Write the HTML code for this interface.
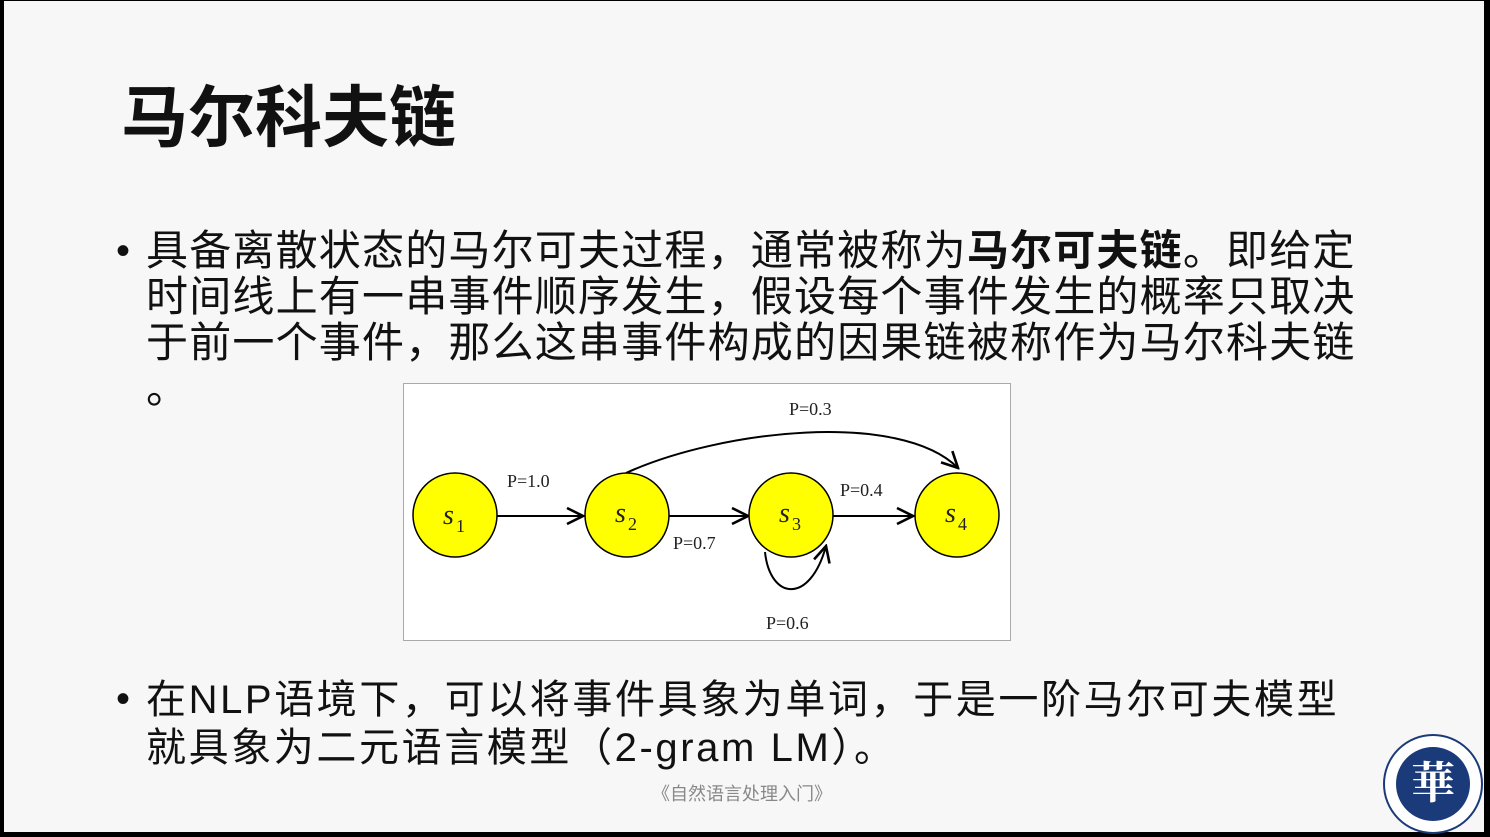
<!DOCTYPE html>
<html><head><meta charset="utf-8"><style>
html,body{margin:0;padding:0;}
body{width:1490px;height:837px;background:#000;position:relative;overflow:hidden;font-family:"Liberation Sans","Noto Sans CJK SC",sans-serif;}
.slide{position:absolute;left:4px;top:1px;width:1480px;height:831px;background:#f7f7f7;}
.t{position:absolute;white-space:nowrap;color:#111;}
</style></head><body>
<div class="slide"></div>
<div class="t" style="left:121px;top:80px;font-size:67px;font-weight:bold;line-height:78px;">马尔科夫链</div>
<div class="t" style="left:116px;top:228px;font-size:40px;line-height:46px;">•</div>
<div class="t" style="left:146px;top:228px;font-size:42px;line-height:46px;letter-spacing:1.2px;">具备离散状态的马尔可夫过程，通常被称为<b>马尔可夫链</b>。即给定<br>时间线上有一串事件顺序发生，假设每个事件发生的概率只取决<br>于前一个事件，那么这串事件构成的因果链被称作为马尔科夫链<br>。</div>
<div style="position:absolute;left:403px;top:383px;width:606px;height:256px;background:#fff;border:1px solid #aaa;"></div>
<svg style="position:absolute;left:0;top:0" width="1490" height="837">
<defs><marker id="a" markerWidth="10" markerHeight="10" refX="9" refY="5" orient="auto"><path d="M1,1 L9,5 L1,9" fill="none" stroke="#000" stroke-width="1.3"/></marker></defs>
<g stroke="#000" stroke-width="2" fill="none">
<line x1="497" y1="516" x2="583" y2="516" marker-end="url(#a)"/>
<line x1="669" y1="516" x2="748" y2="516" marker-end="url(#a)"/>
<line x1="833" y1="516" x2="913" y2="516" marker-end="url(#a)"/>
<path d="M626,473 C720,430 900,410 958,468" marker-end="url(#a)"/>
<path d="M765,552 C770,600 810,605 826,546" marker-end="url(#a)"/>
</g>
<g fill="#ffff00" stroke="#000" stroke-width="1.5">
<circle cx="455" cy="515" r="42"/><circle cx="627" cy="515" r="42"/><circle cx="791" cy="515" r="42"/><circle cx="957" cy="515" r="42"/>
</g>
<g font-family="Liberation Serif,serif" fill="#222">
<text x="443" y="524" font-size="28" font-style="italic">s</text><text x="456" y="532" font-size="18">1</text>
<text x="615" y="522" font-size="28" font-style="italic">s</text><text x="628" y="530" font-size="18">2</text>
<text x="779" y="522" font-size="28" font-style="italic">s</text><text x="792" y="530" font-size="18">3</text>
<text x="945" y="522" font-size="28" font-style="italic">s</text><text x="958" y="530" font-size="18">4</text>
<g font-size="18"><text x="507" y="487">P=1.0</text><text x="673" y="549">P=0.7</text><text x="840" y="496">P=0.4</text><text x="789" y="415">P=0.3</text><text x="766" y="629">P=0.6</text></g>
</g>
<g transform="translate(1433,784)">
<circle r="49" fill="#fff" stroke="#1a3a7a" stroke-width="2"/>
<circle r="37" fill="#1a3a7a"/>
<text x="0" y="14" font-size="44" fill="#fff" text-anchor="middle" font-family="Noto Serif CJK SC,serif" font-weight="bold">華</text>
</g>
</svg>
<div class="t" style="left:116px;top:676px;font-size:40px;line-height:46px;">•</div>
<div class="t" style="left:146px;top:676px;font-size:40px;line-height:48px;letter-spacing:2.6px;">在NLP语境下，可以将事件具象为单词，于是一阶马尔可夫模型<br>就具象为二元语言模型（2-gram LM）。</div>
<div class="t" style="left:652px;top:780px;font-size:18px;color:#888;">《自然语言处理入门》</div>
</body></html>
